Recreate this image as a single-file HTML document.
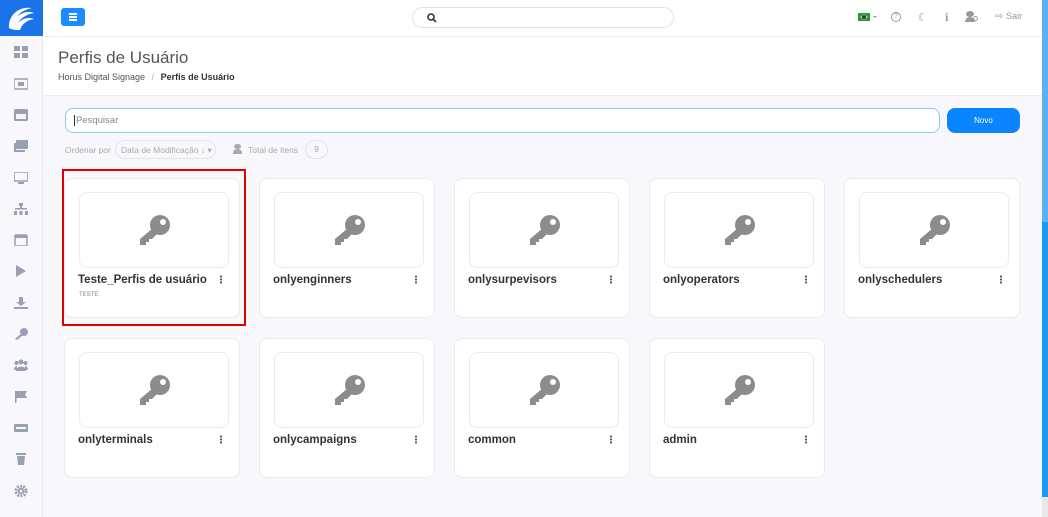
<!DOCTYPE html><html><head><meta charset="utf-8"><style>
*{box-sizing:border-box;margin:0;padding:0}
body{width:1048px;height:517px;overflow:hidden;font-family:"Liberation Sans",sans-serif;background:#f8f8fc;position:relative;color:#444}
.side{position:absolute;left:0;top:0;width:43px;height:517px;background:#f8f8fc;border-right:1px solid #e8e8ee}
.logo{position:absolute;left:0;top:0;width:43px;height:36px;background:#1a73e8}
.si{position:absolute;left:14px;width:14px;height:12px;fill:#9aa0b3}
.hdr{position:absolute;left:43px;top:0;right:6px;height:37px;background:#fff;border-bottom:1px solid #eee}
.tarea{position:absolute;left:43px;top:37px;right:6px;height:59px;background:#fff;border-bottom:1px solid #eee}
.card{position:absolute;width:176px;height:140px;background:#fff;border:1px solid #ececf0;border-radius:8px}
.img{position:absolute;left:14px;top:13px;width:150px;height:76px;border:1px solid #ececf0;border-radius:8px}
.img svg{position:absolute;left:58px;top:20px}
.nm{position:absolute;left:13px;top:95px;font-size:11.5px;font-weight:bold;color:#333}
.dots{position:absolute;right:17px;top:96px;width:2px;height:9px;background:radial-gradient(circle,#555 1px,transparent 1.2px) 0 0/2px 3px}
.sb{position:absolute;left:1042px;width:6px}
</style></head><body>
<div class="side">
<div class="logo"><svg width="43" height="36" viewBox="0 0 43 36"><path d="M9 28 C8 16 18 6 32 8 C26 9 20 12 17 17 C22 12 29 11 34 13 C27 14 21 18 18 23 C23 18 29 17 34 19 C27 20 22 24 20 30 C16 30 12 30 9 28Z" fill="#fff"/></svg></div>
<svg class="si" style="top:46px" viewBox="0 0 14 12"><rect x="0" y="0" width="6" height="5"/><rect x="8" y="0" width="6" height="5"/><rect x="0" y="7" width="6" height="5"/><rect x="8" y="7" width="6" height="5"/></svg>
<svg class="si" style="top:78px" viewBox="0 0 14 12"><rect x="0" y="1" width="14" height="10" rx="1" fill="none" stroke="#9aa0b3" stroke-width="1.5"/><rect x="4" y="4" width="6" height="4"/></svg>
<svg class="si" style="top:109px" viewBox="0 0 14 12"><rect x="0" y="0" width="14" height="12" rx="1.5"/><rect x="2" y="5" width="10" height="5" fill="#f8f8fc"/></svg>
<svg class="si" style="top:140px" viewBox="0 0 14 12"><rect x="2" y="0" width="12" height="9" rx="1"/><rect x="0" y="3" width="2" height="9"/><rect x="0" y="10" width="11" height="2"/></svg>
<svg class="si" style="top:172px" viewBox="0 0 14 12"><rect x="0" y="0" width="14" height="9" rx="1" fill="none" stroke="#9aa0b3" stroke-width="1.6"/><rect x="4" y="10" width="6" height="2"/></svg>
<svg class="si" style="top:203px" viewBox="0 0 14 12"><rect x="5" y="0" width="4" height="3"/><rect x="6" y="3" width="2" height="3"/><rect x="1" y="5" width="12" height="1.5"/><rect x="0" y="8" width="3" height="4"/><rect x="5.5" y="8" width="3" height="4"/><rect x="11" y="8" width="3" height="4"/></svg>
<svg class="si" style="top:234px" viewBox="0 0 14 12"><rect x="1" y="1" width="12" height="11" rx="1" fill="none" stroke="#9aa0b3" stroke-width="1.5"/><rect x="1" y="1" width="12" height="3"/></svg>
<svg class="si" style="top:265px" viewBox="0 0 14 12"><path d="M2 0 L12 6 L2 12Z"/></svg>
<svg class="si" style="top:297px" viewBox="0 0 14 12"><path d="M5 0h4v5h3l-5 4-5-4h3z"/><rect x="0" y="10" width="14" height="2"/></svg>
<svg class="si" style="top:328px" viewBox="0 0 14 12"><circle cx="10" cy="4" r="4"/><path d="M8 5 L1 11 L3 12 L9 7z"/></svg>
<svg class="si" style="top:359px" viewBox="0 0 14 12"><circle cx="7" cy="3" r="2.5"/><circle cx="2.5" cy="4" r="2"/><circle cx="11.5" cy="4" r="2"/><path d="M2 12 C2 6 12 6 12 12Z"/><path d="M0 11 C0 7 3 7 3 7 L3 11Z M14 11 C14 7 11 7 11 7 L11 11Z"/></svg>
<svg class="si" style="top:391px" viewBox="0 0 14 12"><rect x="1" y="0" width="1.5" height="12"/><path d="M2.5 0 H13 L11 3.5 L13 7 H2.5Z"/></svg>
<svg class="si" style="top:422px" viewBox="0 0 14 12"><rect x="0" y="2" width="14" height="8" rx="1"/><rect x="2" y="5" width="10" height="2" fill="#f8f8fc"/></svg>
<svg class="si" style="top:453px" viewBox="0 0 14 12"><rect x="2" y="0" width="10" height="2"/><path d="M3 3h8l-1 9H4z"/></svg>
<svg class="si" style="top:485px" viewBox="0 0 14 12"><circle cx="7" cy="6" r="5" fill="none" stroke="#9aa0b3" stroke-width="3" stroke-dasharray="2 1.2"/><circle cx="7" cy="6" r="3.2"/><circle cx="7" cy="6" r="1.3" fill="#f8f8fc"/></svg>
</div>
<div class="hdr">
<div style="position:absolute;left:18px;top:8px;width:24px;height:18px;background:#1a8cff;border-radius:3px"><div style="position:absolute;left:8px;top:5px;width:8px;height:1.5px;background:#fff;box-shadow:0 3px #fff,0 6px #fff"></div></div>
<div style="position:absolute;left:369px;top:7px;width:262px;height:21px;border:1px solid #e2e2e8;border-radius:11px"><svg width="10" height="10" style="position:absolute;left:14px;top:5px" viewBox="0 0 10 10"><circle cx="4" cy="4" r="3" fill="none" stroke="#333" stroke-width="1.6"/><path d="M6 6l3 3" stroke="#333" stroke-width="1.6"/></svg></div>
<div style="position:absolute;left:815px;top:13px;width:12px;height:8px;background:#229e45"><div style="position:absolute;left:2px;top:1px;width:8px;height:6px;background:#f8d000;clip-path:polygon(50% 0,100% 50%,50% 100%,0 50%)"></div><div style="position:absolute;left:4px;top:2px;width:4px;height:4px;border-radius:50%;background:#1e3a8a"></div></div>
<div style="position:absolute;left:830px;top:16px;border:2.5px solid transparent;border-top-color:#999"></div>
<div style="position:absolute;left:848px;top:12px;width:10px;height:10px;border:1.3px solid #999;border-radius:50%;font-size:7px;line-height:8px;text-align:center;color:#999">?</div>
<div style="position:absolute;left:875px;top:11px;font-size:11px;color:#999">☾</div>
<div style="position:absolute;left:902px;top:10px;font-size:12px;font-weight:bold;color:#999;font-family:'Liberation Serif',serif">i</div>
<div style="position:absolute;left:923px;top:11px;width:8px;height:6px;border-radius:50%;background:#999"></div><div style="position:absolute;left:922px;top:17px;width:10px;height:5px;border-radius:5px 5px 0 0;background:#999"></div><div style="position:absolute;left:930px;top:16px;width:5px;height:5px;border:1px solid #999;border-radius:50%"></div>
<div style="position:absolute;left:952px;top:11px;font-size:10px;color:#999">⇨ <span style="font-size:9px">Sair</span></div>
</div>
<div class="tarea">
<div style="position:absolute;left:15px;top:11px;font-size:17px;color:#555">Perfis de Usuário</div>
<div style="position:absolute;left:15px;top:35px;font-size:9px;color:#555">Horus Digital Signage <span style="color:#aaa;margin:0 4px">/</span> <b style="color:#333">Perfis de Usuário</b></div>
</div>
<div style="position:absolute;left:65px;top:108px;width:875px;height:25px;border:1px solid #8cc8f0;border-radius:8px;background:#fff;font-size:9.5px;color:#888;padding:6px 8px"><span style="border-left:1px solid #333;padding-left:1px">Pesquisar</span></div>
<div style="position:absolute;left:947px;top:108px;width:73px;height:25px;background:#0a85ff;border-radius:8px;color:#fff;font-size:8px;text-align:center;line-height:25px">Novo</div>
<div style="position:absolute;left:65px;top:145px;font-size:8.5px;color:#aaa">Ordenar por</div>
<div style="position:absolute;left:115px;top:140px;width:101px;height:19px;border:1px solid #e2e2e8;border-radius:10px;font-size:8.5px;color:#aaa;padding:4px 5px;white-space:nowrap;overflow:hidden">Data de Modificação ↓ ▾</div>
<div style="position:absolute;left:234px;top:144px;width:7px;height:5px;border-radius:50%;background:#aaa"></div><div style="position:absolute;left:233px;top:149px;width:9px;height:5px;border-radius:4px 4px 0 0;background:#aaa"></div>
<div style="position:absolute;left:248px;top:145px;font-size:8.5px;color:#aaa">Total de itens</div>
<div style="position:absolute;left:305px;top:140px;width:23px;height:19px;border:1px solid #e2e2e8;border-radius:10px;font-size:8.5px;color:#aaa;text-align:center;line-height:17px">9</div>

<div style="position:absolute;left:62px;top:169px;width:184px;height:157px;border:2px solid #e00000"></div>

<div id="cards"></div>
<script>
var n=["Teste_Perfis de usuário","onlyenginners","onlysurpevisors","onlyoperators","onlyschedulers","onlyterminals","onlycampaigns","common","admin"];
var h="";n.forEach(function(t,i){var c=i%5,r=Math.floor(i/5);var x=64+c*195,y=178+r*160;
h+='<div class="card" style="left:'+x+'px;top:'+y+'px"><div class="img"><svg width="34" height="34" viewBox="0 0 34 34"><circle cx="22" cy="12" r="10" fill="#8c8c8c"/><circle cx="25" cy="9" r="3" fill="#fff"/><path d="M15 15 L2 26 L2 32 L8 32 L8 29 L11 29 L11 26 L14 26 L20 20Z" fill="#8c8c8c"/></svg></div><div class="nm">'+t+'</div><div class="dots"></div>'+(i==0?'<div style="position:absolute;left:14px;top:113px;font-size:6px;color:#888">TESTE</div>':'')+'</div>';});
document.getElementById("cards").innerHTML=h;
</script>
<div class="sb" style="top:0;height:222px;background:#5ab2f2"></div>
<div class="sb" style="top:222px;height:275px;background:#1a9af2"></div>
<div class="sb" style="top:497px;height:20px;background:#e8e8e8"></div>
</body></html>
